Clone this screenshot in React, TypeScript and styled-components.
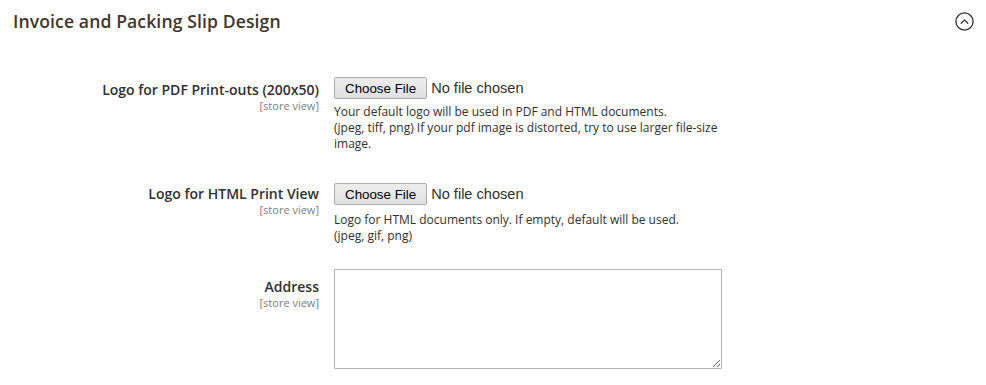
import React from 'react'
import styled, { createGlobalStyle } from 'styled-components'

const GlobalStyle = createGlobalStyle`
  html, body {
    margin: 0;
    padding: 0;
    background: #ffffff;
  }
  body {
    font-family: 'Open Sans', 'Liberation Sans', Arial, sans-serif;
    color: #303030;
  }
`

const Section = styled.section`
  width: 986px;
`

const Header = styled.div`
  display: flex;
  align-items: center;
  justify-content: space-between;
  height: 42px;
  padding: 0 12px 0 13px;
  box-sizing: border-box;
`

const Title = styled.h2`
  margin: 0;
  font-size: 17.6px;
  font-weight: 600;
  color: #41362f;
  letter-spacing: 0.1px;
`

const CollapseButton = styled.button`
  display: flex;
  align-items: center;
  justify-content: center;
  width: 20px;
  height: 20px;
  padding: 0;
  border: none;
  background: none;
  color: #303030;
  cursor: pointer;
`

const Fieldset = styled.div`
  padding-top: 35px;
`

const FieldRow = styled.div<{ spacing: number }>`
  display: grid;
  grid-template-columns: 319px 388px;
  column-gap: 15px;
  padding-bottom: ${({ spacing }) => spacing}px;
`

const LabelCell = styled.div<{ offset: number }>`
  display: flex;
  flex-direction: column;
  align-items: flex-end;
  text-align: right;
  padding-top: ${({ offset }) => offset}px;
`

const Label = styled.label`
  font-size: 14px;
  font-weight: 600;
  line-height: 18px;
  color: #303030;
`

const Scope = styled.span`
  font-size: 11px;
  line-height: 14px;
  color: #808080;
`

const ControlCell = styled.div`
  display: flex;
  flex-direction: column;
`

const FileInput = styled.input`
  font-family: 'Liberation Sans', Arial, sans-serif;
  font-size: 14.6px;
  color: #303030;
  height: 22px;
  padding: 0;
  margin: 0;

  &::file-selector-button {
    font-family: 'Liberation Sans', Arial, sans-serif;
    font-size: 13.33px;
    color: #000000;
    height: 22px;
    padding: 1px 10px;
    margin: 0 4px 0 0;
    background: linear-gradient(#ededed, #e0e0e0);
    border: 1px solid #adadad;
    border-radius: 2px;
  }
`

const Note = styled.div<{ gap: number }>`
  margin-top: ${({ gap }) => gap}px;
  font-size: 12px;
  line-height: 16px;
  color: #303030;
`

const TextArea = styled.textarea`
  width: 388px;
  height: 100px;
  box-sizing: border-box;
  border: 1px solid #b3b3b3;
  border-radius: 1px;
  margin: 0;
  padding: 6px 10px;
  font-family: 'Open Sans', sans-serif;
  font-size: 14px;
  resize: vertical;
`

function ChevronCircle() {
  return (
    <svg width="19" height="19" viewBox="0 0 19 19" fill="none" stroke="currentColor">
      <circle cx="9.5" cy="9.5" r="8.6" strokeWidth="1.3" />
      <path d="M6.2 11.2 L9.5 7.9 L12.8 11.2" strokeWidth="1.3" strokeLinecap="round" strokeLinejoin="round" />
    </svg>
  )
}

export default function App() {
  return (
    <Section>
      <GlobalStyle />
      <Header>
        <Title>Invoice and Packing Slip Design</Title>
        <CollapseButton aria-label="Collapse">
          <ChevronCircle />
        </CollapseButton>
      </Header>
      <Fieldset>
        <FieldRow spacing={31}>
          <LabelCell offset={4}>
            <Label>Logo for PDF Print-outs (200x50)</Label>
            <Scope>[store view]</Scope>
          </LabelCell>
          <ControlCell>
            <FileInput type="file" />
            <Note gap={5}>
              Your default logo will be used in PDF and HTML documents.
              <br />
              (jpeg, tiff, png) If your pdf image is distorted, try to use larger file-size image.
            </Note>
          </ControlCell>
        </FieldRow>
        <FieldRow spacing={25}>
          <LabelCell offset={2}>
            <Label>Logo for HTML Print View</Label>
            <Scope>[store view]</Scope>
          </LabelCell>
          <ControlCell>
            <FileInput type="file" />
            <Note gap={7}>
              Logo for HTML documents only. If empty, default will be used.
              <br />
              (jpeg, gif, png)
            </Note>
          </ControlCell>
        </FieldRow>
        <FieldRow spacing={0}>
          <LabelCell offset={9}>
            <Label>Address</Label>
            <Scope>[store view]</Scope>
          </LabelCell>
          <ControlCell>
            <TextArea />
          </ControlCell>
        </FieldRow>
      </Fieldset>
    </Section>
  )
}
